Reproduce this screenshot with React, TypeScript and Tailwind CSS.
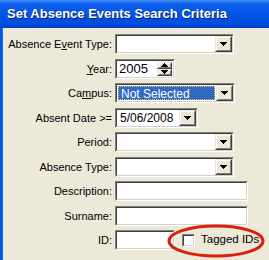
import React from "react";

const sunken =
  "border border-t-[#808080] border-l-[#808080] border-b-white border-r-white";
const sunkenInner =
  "border border-t-[#404040] border-l-[#404040] border-b-[#d4d0c8] border-r-[#d4d0c8]";
const raised =
  "border border-t-[#ece9d8] border-l-[#ece9d8] border-b-[#404040] border-r-[#404040]";
const raisedInner =
  "border border-t-white border-l-white border-b-[#808080] border-r-[#808080]";

const Arrow = ({ up = false }: { up?: boolean }) => (
  <svg width="7" height="4" viewBox="0 0 7 4" className={up ? "rotate-180" : ""}>
    <path d="M0 0h7v1H6v1H5v1H4v1H3V3H2V2H1V1H0z" fill="#000" />
  </svg>
);

const DropButton = () => (
  <div className={`${raised} w-[17px] h-full bg-[#ece9d8]`}>
    <div className={`${raisedInner} w-full h-full flex items-center justify-center`}>
      <Arrow />
    </div>
  </div>
);

const Box = ({
  width,
  children,
}: {
  width: number | string;
  children?: React.ReactNode;
}) => (
  <div className={`${sunken} h-5 bg-white shrink-0`} style={{ width }}>
    <div className={`${sunkenInner} w-full h-full flex`}>{children}</div>
  </div>
);

const Combo = ({ width, value, selected = false }: { width: number; value?: string; selected?: boolean }) => (
  <Box width={width}>
    <div className="flex-1 p-px min-w-0 whitespace-nowrap">
      {selected ? (
        <div className="h-full bg-[#316ac5] text-white border border-dotted border-[#e0c060] leading-[14px] pl-[2px] text-[12px]">
          {value}
        </div>
      ) : (
        <div className="h-full leading-[15px] pl-[2px] text-[12px]">{value}</div>
      )}
    </div>
    <DropButton />
  </Box>
);

const Row = ({ label, children }: { label: React.ReactNode; children: React.ReactNode }) => (
  <div className="flex items-center h-5">
    <div className="w-[109px] text-right leading-[20px] whitespace-nowrap">{label}</div>
    <div className="ml-[3px] flex items-center">{children}</div>
  </div>
);

export default function App() {
  return (
    <div
      className="w-[269px] h-[260px] bg-[#ece9d8] overflow-hidden text-[11px] text-black"
      style={{ fontFamily: "'Liberation Sans', Arial, sans-serif" }}
    >
      <div className="h-[28px] bg-[linear-gradient(to_bottom,#3d8ef8_0%,#0a5ee9_15%,#0055e5_55%,#004ddc_85%,#003fc4_100%)] flex items-center pl-[7px]">
        <span className="text-white font-bold text-[13px] whitespace-nowrap [text-shadow:1px_1px_0_#0a1e6a]">
          Set Absence Events Search Criteria
        </span>
      </div>
      <div className="relative flex h-[232px]">
        <div className="w-[3px] bg-[#0055ea] border-r border-r-[#1d6bf0]" />
        <div className="flex flex-col gap-[4.5px] pt-[6px]">
          <Row
            label={
              <>
                Absence E<span className="underline">v</span>ent Type:
              </>
            }
          >
            <Combo width={119} />
          </Row>
          <Row
            label={
              <>
                <span className="underline">Y</span>ear:
              </>
            }
          >
            <Box width={60}>
              <div className="flex-1 leading-[16px] pl-[2px] text-[13px]">2005</div>
              <div className="flex flex-col w-[15px] mr-px my-px">
                <div className={`${raised} h-1/2 bg-[#ece9d8]`}>
                  <div className={`${raisedInner} h-full flex items-center justify-center`}>
                    <Arrow up />
                  </div>
                </div>
                <div className={`${raised} h-1/2 bg-[#ece9d8]`}>
                  <div className={`${raisedInner} h-full flex items-center justify-center`}>
                    <Arrow />
                  </div>
                </div>
              </div>
            </Box>
          </Row>
          <Row
            label={
              <>
                Ca<span className="underline">m</span>pus:
              </>
            }
          >
            <Combo width={120} value="Not Selected" selected />
          </Row>
          <Row label="Absent Date >=">
            <Combo width={83} value="5/06/2008" />
          </Row>
          <Row label="Period:">
            <Combo width={119} />
          </Row>
          <Row label="Absence Type:">
            <Combo width={119} />
          </Row>
          <Row label="Description:">
            <Box width={133} />
          </Row>
          <Row label="Surname:">
            <Box width={133} />
          </Row>
          <Row label="ID:">
            <Box width={60} />
            <div className={`${sunken} ml-[7px] w-[13px] h-[13px] bg-white`}>
              <div className={`${sunkenInner} w-full h-full`} />
            </div>
            <span className="ml-[6px] whitespace-nowrap text-[11.5px]">Tagged IDs</span>
          </Row>
          <svg
            className="absolute left-[167px] top-[196px]"
            width="100"
            height="36"
            viewBox="0 0 100 36"
          >
            <ellipse cx="49" cy="17" rx="47" ry="15" fill="none" stroke="#d8200a" strokeWidth="3" />
          </svg>
        </div>
      </div>
    </div>
  );
}
